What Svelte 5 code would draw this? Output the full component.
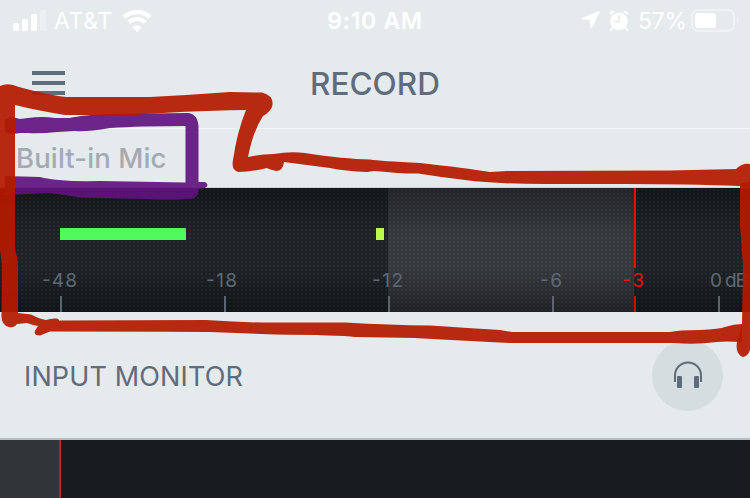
<script>
  const ticks = [
    { x: 61, label: '-48', left: 42, width: 35 },
    { x: 225, label: '-18', left: 206, width: 31 },
    { x: 389, label: '-12', left: 372, width: 31 },
    { x: 553, label: '-6', left: 540, width: 22 },
    { x: 635, label: '-3', left: 622, width: 22, limit: true },
    { x: 719, label: '0 dB', left: 710, width: 38 }
  ];
</script>

<main>
  <div class="status">
    <div class="side">
      <svg width="34" height="22" viewBox="0 0 34 22" fill="#fff">
        <rect x="0" y="13" width="6" height="8" rx="1.6" />
        <rect x="9" y="9" width="6" height="12" rx="1.6" />
        <rect x="18" y="4" width="6" height="17" rx="1.6" />
        <rect x="27" y="0" width="6" height="21" rx="1.6" opacity=".3" />
      </svg>
      <span class="carrier">AT&amp;T</span>
      <svg class="wifi" width="30" height="22" viewBox="0 0 30 22">
        <path d="M2 7.3a18.7 18.7 0 0 1 26 0" fill="none" stroke="#fff" stroke-width="4.2" />
        <path d="M6.7 12.3a12 12 0 0 1 16.6 0" fill="none" stroke="#fff" stroke-width="4" />
        <path d="M10.4 17.3q4.6-4 9.2 0L15 22Z" fill="#fff" />
      </svg>
    </div>
    <span class="time">9:10 AM</span>
    <div class="side right">
      <svg class="arrow" width="20" height="20" viewBox="0 0 20 20">
        <path d="M17.4.3 1.3 7.1q-1.8 1.1.2 1.5l7.5.3.3 7.7q.5 2 1.6.1L18.4 1.6Q18.8-.1 17.4.3Z" fill="#fff" />
      </svg>
      <svg class="alarm" width="20" height="22" viewBox="0 0 20 22">
        <path d="M.8 5Q.2 1.5 3.8.6q1.7 0 2 1.2ZM19.2 5Q19.8 1.5 16.2.6q-1.7 0-2 1.2Z" fill="#fff" />
        <path d="m4.5 17-2.800 3M15.5 17l2.800 3" stroke="#fff" stroke-width="1.8" stroke-linecap="round" />
        <circle cx="10" cy="11.2" r="8.8" fill="#fff" />
        <path d="M10 5.5v6H5.2" fill="none" stroke="#e5eaed" stroke-width="1.5" stroke-linecap="round" />
      </svg>
      <span class="percent">57%</span>
      <svg class="battery" width="48" height="24" viewBox="0 0 48 24">
        <rect x="1" y="1" width="42" height="21" rx="6" fill="none" stroke="#fff" stroke-width="2" opacity=".42" />
        <rect x="4" y="4" width="21" height="15" rx="3" fill="#fff" />
        <path d="M46 8q3 3.5 0 7Z" fill="#fff" opacity=".42" />
      </svg>
    </div>
  </div>

  <header>
    <div class="menu"><i></i><i></i><i></i></div>
    <h1>RECORD</h1>
  </header>

  <section class="source"><span>Built-in Mic</span></section>

  <svg class="meter" width="750" height="124" viewBox="0 0 750 124">
    <defs>
      <pattern id="dots" width="4" height="4" patternUnits="userSpaceOnUse">
        <rect x="1" y="1" width="2" height="2" fill="#fff" opacity=".055" />
      </pattern>
      <linearGradient id="shade" x1="0" y1="0" x2="0" y2="1">
        <stop offset="0" stop-color="#000" stop-opacity=".36" />
        <stop offset=".38" stop-color="#000" stop-opacity="0" />
        <stop offset=".65" stop-color="#000" stop-opacity="0" />
        <stop offset="1" stop-color="#000" stop-opacity=".4" />
      </linearGradient>
    </defs>
    <rect width="750" height="124" fill="#1d2226" />
    <rect x="388" width="246" height="124" fill="#35383d" />
    <rect width="750" height="124" fill="url(#dots)" />
    <rect width="750" height="124" fill="url(#shade)" />
    <rect x="60" y="40" width="126" height="12" fill="#50fa5d" />
    <rect x="376" y="40" width="8" height="12" fill="#bdf84c" />
    <rect x="634" width="2" height="80" fill="#f80500" />
    {#each ticks as t}
      <rect x={t.x - 1} y="108" width="2" height="16" fill={t.limit ? '#d50805' : '#5b6570'} />
      <text x={t.left} y="99" textLength={t.width} class:limit={t.limit}>{t.label}</text>
    {/each}
  </svg>

  <section class="monitor">
    <span>INPUT MONITOR</span>
    <div class="phones">
      <svg width="30" height="30" viewBox="0 0 30 30">
        <path d="M2 22v-6.5a13 13 0 0 1 26 0V22" fill="none" stroke="#5e6c7b" stroke-width="2" />
        <rect x="4" y="16" width="5" height="12" rx="1" fill="#5e6c7b" />
        <rect x="21" y="16" width="5" height="12" rx="1" fill="#5e6c7b" />
      </svg>
    </div>
  </section>

  <section class="wave"><div class="recorded"></div></section>

  <svg class="marks" width="750" height="498" viewBox="0 0 750 498">
    <g fill="#5f147d" fill-opacity=".92">
      <path d="M5 119Q12 116 20 119L28 118Q42 116 55 118L70 118Q82 115 110 114L188 113Q198 114 198.5 127V182L205 182Q210 185 205 188L198.5 189Q199 199 188 199Q165 200 145 199L80 197.5Q65 195 50 193L5 195V176L40 177Q58 182 100 181L185.5 182.5V126Q140 126 110 128Q86 132 75 131L57 132Q40 134 27 133L20 133Q8 135 5 131Z" />
    </g>
    <g fill="#b51a00" fill-opacity=".93">
      <!-- left edge, top edge and the zigzag down to the long upper line -->
      <path d="M0 86Q8 82 19 87Q48 95 66 97L150 97Q190 95 230 92L262 92.5Q275 96 272 107Q269 113 263 116Q253 131 248 157Q261 154 274 154Q290 151 305 153Q344 159 370 159.5Q380 161 420 163Q465 168 490 172L507 171L670 170.5L736 169Q742 163 750 164V188L739 186Q690 184 625 184L545 184Q495 184 465 180Q440 177 418 173.500Q405 174 374 171L367 172Q345 171 330 168L284 162Q283 171 276 171Q268 169 267 168Q251 172 238 172Q231 170 233 160Q237 132 246 110Q180 111 135 115L65 115Q35 110 15 105V250Q18 258 18 268L18 313L31 314.5Q40 319 46 320Q51 318 57 318.5Q62 321 57 323L60 320.500L206 320Q250 323 280 322.5L345 322.500Q390 325 430 325.5Q470 328 500 330L512 332L670 332Q678 330 700 330Q720 329 725 327Q734 324 742 324V342Q725 341 717 342Q695 345 674 343L510 343Q470 341 415 338L355 337Q340 335 275 334.5L210 332Q200 331.5 50 331.5L40 335.5Q32 335 36 329L38 326Q32 325 27 323L17 324Q14 328 9 327Q1 325 1.500 315L2 265L0 250Z" />
      <!-- right edge -->
      <path d="M740 184L750 181V350Q748 356 743 357Q735 354 737 342L742 324L743 265L740 225Z" />
    </g>
  </svg>
</main>

<style>
  main {
    position: relative;
    width: 750px;
    height: 498px;
    overflow: hidden;
    display: flex;
    flex-direction: column;
    background: #e5eaed;
    color: #5e6c7b;
    font-family: Inter, 'Liberation Sans', sans-serif;
  }
  svg { display: block; flex: none; }
  .status {
    height: 40px;
    display: grid;
    grid-template-columns: 1fr auto 1fr;
    align-items: center;
    color: #fff;
    font-size: 23px;
    line-height: 40px;
    white-space: nowrap;
  }
  .status span { padding-top: 1px; }
  .side { display: flex; align-items: center; padding-left: 13px; }
  .right { justify-content: flex-end; padding: 0 11px 0 0; }
  .carrier { width: 60px; margin-left: 7px; letter-spacing: .6px; }
  .wifi { margin-left: 8px; }
  .time { font-weight: 600; letter-spacing: .7px; }
  .arrow { margin-right: 8px; }
  .alarm { margin-right: 9px; }
  .percent { width: 51px; letter-spacing: -.3px; }
  .battery { margin-left: 2px; }
  header {
    height: 88px;
    flex: none;
    display: grid;
    grid-template-columns: 1fr auto 1fr;
    border-bottom: 1px solid #f5f6f8;
  }
  .menu { display: flex; flex-direction: column; gap: 6px; padding: 31px 0 0 32px; }
  .menu i { width: 33px; height: 4px; background: #5e6c7b; }
  h1 { margin: 0; font-size: 31.5px; line-height: 88px; font-weight: 500; }
  .source {
    height: 58px;
    flex: none;
    border-bottom: 1px solid #cfd5d9;
    padding-left: 16px;
    font-size: 27.5px;
    line-height: 58px;
    letter-spacing: .12px;
    font-weight: 500;
    color: #a2abb4;
  }
  .meter text { font-size: 19px; fill: #5e6975; }
  .meter text.limit { fill: #fa0800; }
  .monitor {
    height: 126px;
    flex: none;
    display: flex;
    align-items: center;
    justify-content: space-between;
    padding: 0 27px 0 24px;
    border-bottom: 2px solid #b4bdc5;
    font-size: 27px;
    letter-spacing: .14px;
  }
  .monitor span { padding-top: 2px; }
  .phones {
    width: 71px;
    height: 71px;
    border-radius: 50%;
    background: #d6dde0;
    display: grid;
    place-items: center;
  }
  .wave { flex: 1; background: #171c1f; display: flex; }
  .recorded { width: 59px; background: #303538; border-right: 2px solid #c5202e; }
  .marks { position: absolute; left: 0; top: 0; }
</style>
